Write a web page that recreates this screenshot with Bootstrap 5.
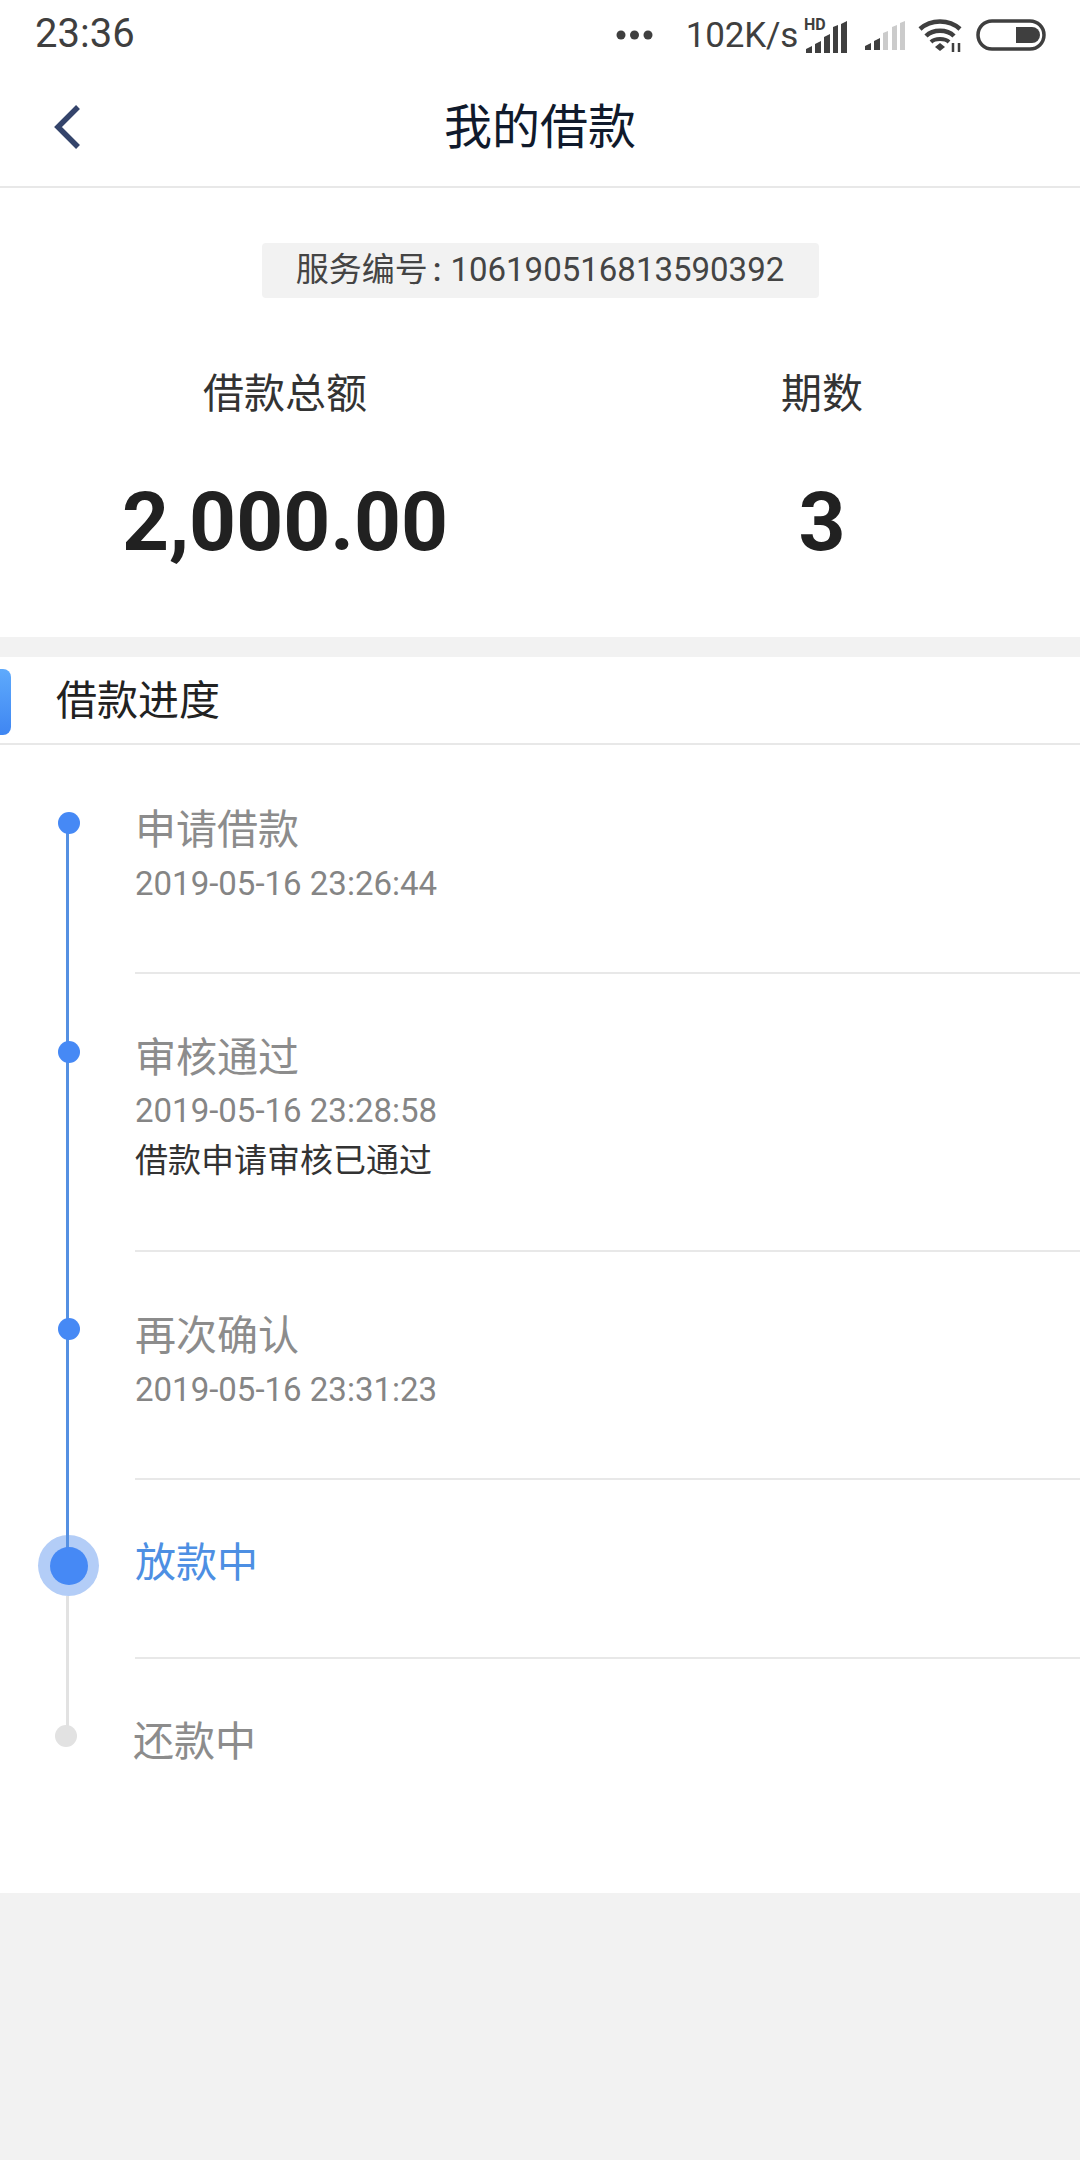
<!DOCTYPE html>
<html lang="zh">
<head>
<meta charset="utf-8">
<title>我的借款</title>
<link rel="stylesheet" href="https://cdn.jsdelivr.net/npm/bootstrap@5.3.0/dist/css/bootstrap.min.css">
<style>
html,body{background:#f2f2f2;}
body{font-family:Roboto,"Noto Sans CJK SC",sans-serif;width:1080px;min-height:2160px;color:#222;}
.sheet{background:#fff;}
.status-strip{height:70px;padding:0 35px;color:#3f3f3f;}
.clock{font-size:40px;line-height:1;margin-top:-2px;}
.net-speed{font-size:35px;line-height:1;letter-spacing:-.2px;margin-left:32px;margin-right:6px;}
.status-right{margin-right:-1px;}
.status-right svg{display:block;}
.gap-signal{margin-left:16px;}
.gap-tight{margin-left:12px;}
.top-nav{height:118px;border-bottom:2px solid #e8e8e8;position:relative;}
.top-title{font-size:48px;line-height:1;color:#101a2c;font-weight:400;margin:0;}
.back-arrow{position:absolute;left:53px;top:34px;}
.service-tag{width:557px;height:55px;background:#f2f2f2;color:#444;font-size:33px;line-height:54px;margin:55px auto 0;border-radius:4px;text-align:center;}
.tag-colon{margin:0 9px 0 5px;font-weight:500;}
.totals{padding-top:71px;height:339px;}
.total-a{width:570px;}
.total-b{width:510px;margin-left:-3px;}
.total-label{font-size:41px;line-height:50px;color:#333;}
.total-value{font-size:82px;line-height:84px;font-weight:700;color:#212121;margin-top:61px;}
.gray-gap{height:20px;background:#f2f2f2;}
.section-head{height:88px;border-bottom:2px solid #e8e8e8;position:relative;padding-left:56px;font-size:41px;line-height:88px;color:#222;}
.section-tab{position:absolute;left:0;top:12px;width:11px;height:66px;border-radius:0 8px 8px 0;background:linear-gradient(180deg,#5eaafc,#3f86f2);}
.step{position:relative;padding-left:135px;}
.step-body{height:100%;border-bottom:2px solid #e8e8e8;}
.step.last .step-body{border-bottom:0;}
.s1{height:229px}.s2{height:278px}.s3{height:228px}.s4{height:179px}.s5{height:234px}
.step-title{font-size:41px;line-height:50px;color:#8c8c8c;}
.step-time{font-size:33px;line-height:40px;color:#858585;margin-top:9px;}
.s2 .step-time{margin-top:8px;}
.step-note{font-size:33px;line-height:40px;color:#333;margin-top:10px;}
.s1 .step-body{padding-top:60px;}
.s2 .step-body,.s3 .step-body{padding-top:59px;}
.s4 .step-body{padding-top:58px;}
.s4 .step-title{color:#4d8fe3;}
.s5 .step-body{padding-top:58px;}
.s5 .step-title{margin-left:-2px;}
.rail-line{position:absolute;left:66px;width:3px;background:#5590e2;}
.rail-dot{position:absolute;width:22px;height:22px;border-radius:50%;background:#4689f5;}
.s1 .rail-line{top:78px;bottom:0}
.s2 .rail-line,.s3 .rail-line{top:0;bottom:0}
.s1 .rail-dot{left:58px;top:67px}
.s2 .rail-dot{left:58px;top:67px}
.s3 .rail-dot{left:58px;top:66px}
.s4 .rail-line{top:0;height:70px;z-index:1}
.halo{position:absolute;left:38px;top:55px;width:61px;height:61px;border-radius:50%;background:#b3cdf7;}
.core{position:absolute;left:50px;top:67px;width:38px;height:38px;border-radius:50%;background:#4689f5;z-index:2;}
.s4 .rail-low{top:116px;height:63px;background:#e2e2e2;}
.s5 .rail-line{top:0;height:70px;background:#e2e2e2;}
.s5 .rail-dot{left:55px;top:66px;background:#e2e2e2;}
</style>
</head>
<body>
<div class="sheet">
  <div class="status-strip d-flex align-items-center justify-content-between">
    <span class="clock">23:36</span>
    <div class="status-right d-flex align-items-center">
      <svg width="38" height="12" viewBox="0 0 38 12" fill="#3f3f3f"><circle cx="5" cy="6" r="4.5"/><circle cx="18.500" cy="6" r="4.500"/><circle cx="32" cy="6" r="4.500"/></svg>
      <span class="net-speed">102K/s</span>
      <svg width="44" height="44" viewBox="0 -4 44 44" fill="#3f3f3f"><text x="0" y="13" font-family="Roboto,sans-serif" font-weight="700" font-size="16">HD</text><path d="M2 36v-4l6-3v7zM11 36v-9l6-3v12zM20 36V20l6-3v19zM29 36V10l5-2v28zM37 36V7l6-3v32z"/></svg>
      <svg width="42" height="30" viewBox="0 0 42 30" class="gap-signal" fill="#cbcbcb"><path fill="#3f3f3f" d="M1 30v-4l6-3v7zM10 30v-9l6-3v12z"/><path d="M19 30V13l5-2v19zM28 30V7l5-2v25zM36 30V3l5-2v29z"/></svg>
      <svg width="46" height="34" viewBox="0 0 46 34" class="gap-tight" fill="none" stroke="#3f3f3f" stroke-width="4.500"><path d="M2 11c11-10 29-10 40 0M8 18c7-7 21-7 28 0"/><path d="M13 24c4-4 14-4 18 0" stroke-width="4"/><path d="M17 29l5-4 5 4-5 4z" fill="#3f3f3f" stroke="none"/><path d="M35 25v9M41 25v9" stroke-width="2.500"/></svg>
      <svg width="70" height="32" viewBox="0 0 70 32" class="gap-tight" fill="none"><rect x="2" y="2" width="66" height="28" rx="14" stroke="#3f3f3f" stroke-width="3.500"/><path d="M40 8h16a8 8 0 0 1 8 8 8 8 0 0 1-8 8H40z" fill="#3f3f3f"/></svg>
    </div>
  </div>
  <nav class="top-nav d-flex align-items-center justify-content-center">
    <svg class="back-arrow" width="28" height="46" viewBox="0 0 28 46" fill="none" stroke="#34446b" stroke-width="5.500"><path d="M25 3 5 23l20 20"/></svg>
    <h1 class="top-title">我的借款</h1>
  </nav>
  <div class="service-tag">服务编号<span class="tag-colon">:</span>106190516813590392</div>
  <div class="totals d-flex text-center">
    <div class="total-a">
      <div class="total-label">借款总额</div>
      <div class="total-value">2,000.00</div>
    </div>
    <div class="total-b">
      <div class="total-label">期数</div>
      <div class="total-value">3</div>
    </div>
  </div>
  <div class="gray-gap"></div>
  <div class="section-head"><span class="section-tab"></span>借款进度</div>
  <div class="step s1">
    <span class="rail-line"></span><span class="rail-dot"></span>
    <div class="step-body"><div class="step-title">申请借款</div><div class="step-time">2019-05-16 23:26:44</div></div>
  </div>
  <div class="step s2">
    <span class="rail-line"></span><span class="rail-dot"></span>
    <div class="step-body"><div class="step-title">审核通过</div><div class="step-time">2019-05-16 23:28:58</div><div class="step-note">借款申请审核已通过</div></div>
  </div>
  <div class="step s3">
    <span class="rail-line"></span><span class="rail-dot"></span>
    <div class="step-body"><div class="step-title">再次确认</div><div class="step-time">2019-05-16 23:31:23</div></div>
  </div>
  <div class="step s4">
    <span class="halo"></span><span class="rail-line"></span><span class="rail-line rail-low"></span><span class="core"></span>
    <div class="step-body"><div class="step-title">放款中</div></div>
  </div>
  <div class="step s5 last">
    <span class="rail-line"></span><span class="rail-dot"></span>
    <div class="step-body"><div class="step-title">还款中</div></div>
  </div>
</div>
</body>
</html>
